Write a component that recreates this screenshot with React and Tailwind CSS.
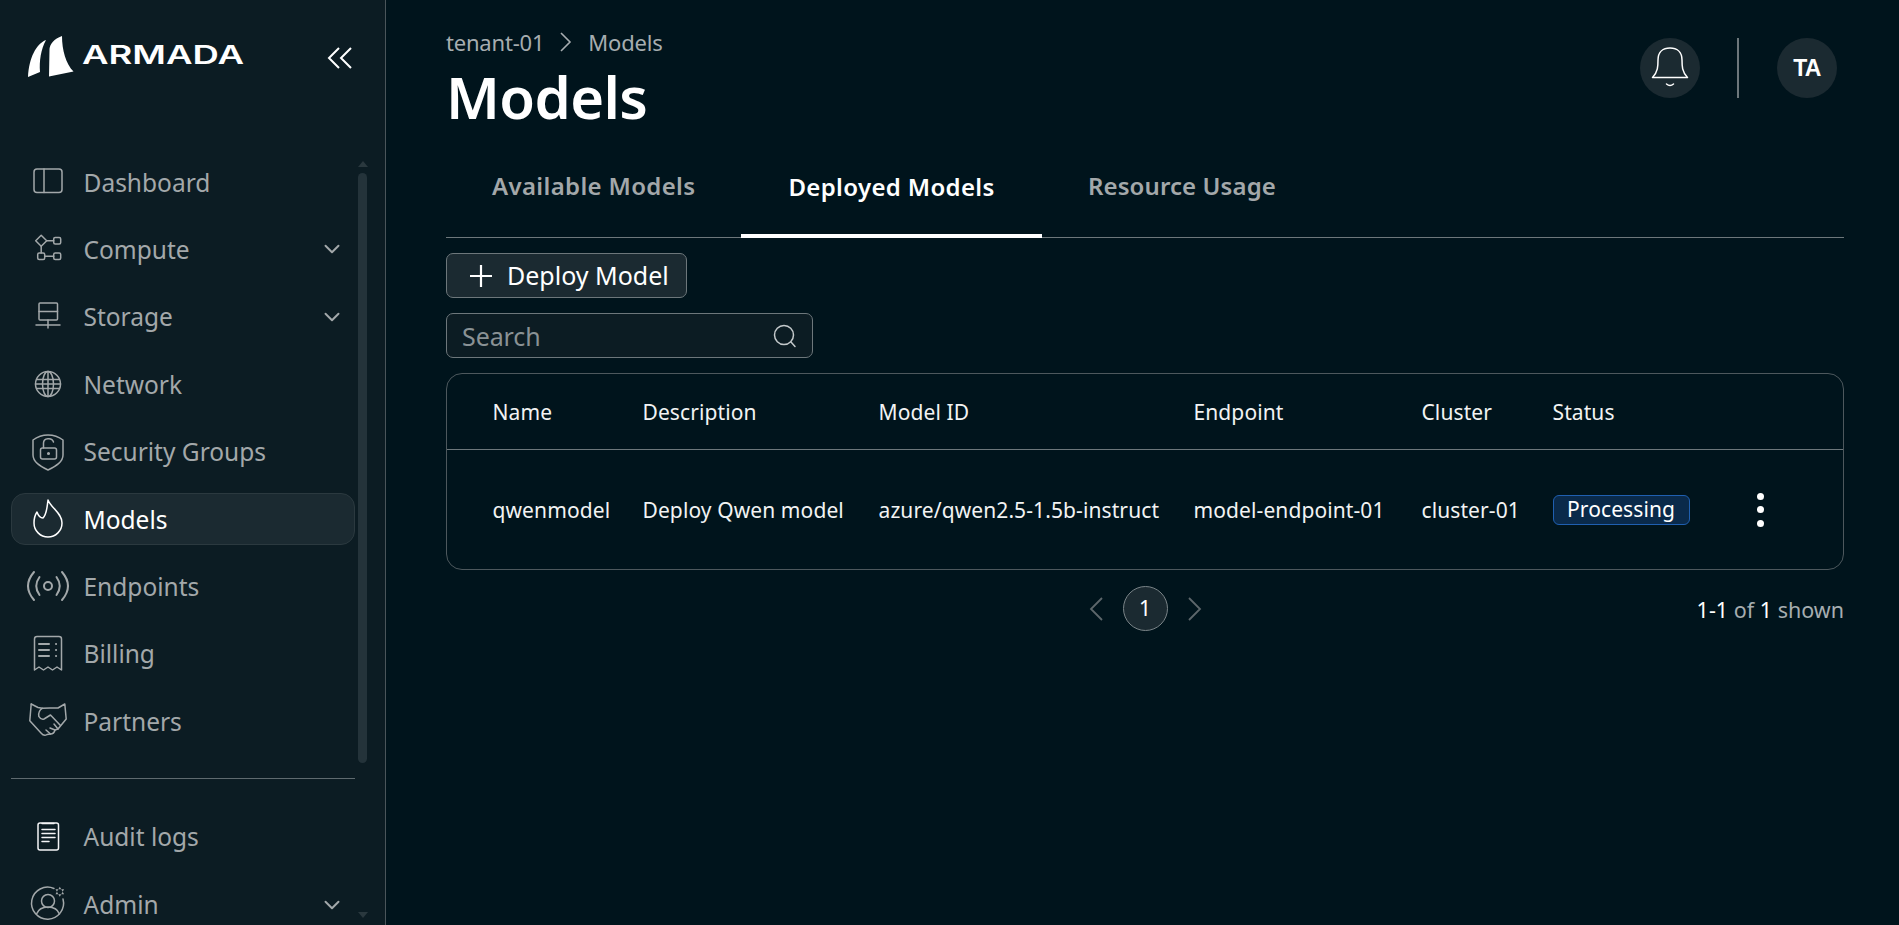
import { ChevronDown } from 'lucide-react'

const Svg = ({ children, className = '' }) => (
  <svg viewBox="0 0 40 40" fill="none" stroke="currentColor" strokeWidth="1.5" strokeLinecap="round" strokeLinejoin="round" className={`w-10 h-10 overflow-visible ${className}`}>
    {children}
  </svg>
)

const DashboardIcon = () => (
  <Svg>
    <rect x="6" y="7" width="28" height="23.5" rx="3" />
    <path d="M16 7v23.5" />
  </Svg>
)

const ComputeIcon = () => (
  <Svg>
    <path d="M13.2 6.2l5.5 5.5-5.5 5.5-5.5-5.5z" />
    <rect x="25.7" y="8.5" width="7" height="6.5" rx="1.5" />
    <rect x="9.7" y="24" width="7" height="6.5" rx="1.5" />
    <rect x="25.7" y="24" width="7" height="6.5" rx="1.5" />
    <path d="M18.7 11.7h7M13.2 17.2V24M16.7 27.3h9" />
  </Svg>
)

const StorageIcon = () => (
  <Svg>
    <rect x="11" y="6" width="18.5" height="17" rx="1" />
    <path d="M11 14.5h18.5M20 23v8M8 28h24" />
  </Svg>
)

const NetworkIcon = () => (
  <Svg>
    <circle cx="20" cy="20" r="12.5" />
    <ellipse cx="20" cy="20" rx="5.5" ry="12.5" />
    <path d="M20 7.5v25M9 15.5h22M9 24.5h22M7.5 20h25" />
  </Svg>
)

const SecurityIcon = () => (
  <Svg>
    <path d="M5 8c4-3 9-5 15-5s11 2 15 5v15c0 7-7 11-15 15-8-4-15-8-15-15z" />
    <rect x="12.5" y="16" width="16" height="11" rx="2" />
    <path d="M15.5 16v-5c0-5 8.500-6 10-1" />
    <circle cx="20.500" cy="21.500" r="0.8" fill="currentColor" />
  </Svg>
)

const FlameIcon = () => (
  <Svg>
    <path d="M20 1c3 8 14 13 14 23a14 14 0 0 1-28 0c0-4 1-8 3-11 1 3 3 6 6 6 4-4 4-11 5-18z" />
  </Svg>
)

const EndpointIcon = () => (
  <Svg>
    <circle cx="20" cy="20" r="4" strokeWidth="2" />
    <path strokeWidth="2" d="M6 6Q-6 20 6 34M34 6Q46 20 34 34M11.500 11Q5 20 11.500 29M28.500 11Q35 20 28.500 29" />
  </Svg>
)

const BillingIcon = () => (
  <Svg>
    <path d="M6.500 36V5a2.500 2.500 0 0 1 2.500-2.500h22A2.500 2.500 0 0 1 33.500 5v31l-4.500-3-4.500 3-4.500-3-4.500 3-4.500-3z" />
    <path d="M11 10h10M11 16h10M11 22h10M28 10h.1M28 16h.1M28 22h.1" strokeWidth="2" />
  </Svg>
)

const PartnersIcon = () => (
  <Svg>
    <path d="M3.200 3L1.800 19.700 13 32q3 3.500 6 1.500l3.500-.5q3.500 0 4.500-4l3-1 8.200-10L36.800 3 30 7h-8l-7.800.3Q10 10 10.800 15.300q2.200 3.700 5.200 2.700l6.500-4L32 24" />
    <path d="M3.200 3L10 6.500l4.200.8M22 27l5 2M18 29l4.500 4M26 23l4 5" />
  </Svg>
)

const AuditIcon = () => (
  <Svg className="text-gray-100">
    <rect x="10" y="7" width="20.500" height="27" rx="2" />
    <path d="M14 7.500h12M14 13.500h13M14 17.500h13M14 21.500h13M14 25.500h7" />
  </Svg>
)

const AdminIcon = () => (
  <Svg>
    <path d="M26 3.500A16 16 0 1 0 35 14" />
    <circle cx="20" cy="16" r="6.500" />
    <path d="M8.500 29c2-5 6.500-7 11.500-7s9.500 2 11.500 7" />
    <path d="M31.800 1.700l4.300 7.500h-8.600zM31.800 11.700l4.300-7.500h-8.600z" fill="currentColor" stroke="none" />
    <circle cx="31.800" cy="6.700" r="1.300" fill="#0c1c23" stroke="none" />
  </Svg>
)

const BellIcon = () => (
  <svg viewBox="0 0 60 60" fill="none" stroke="currentColor" strokeWidth="1.5" strokeLinejoin="round" strokeLinecap="round" className="w-[60px] h-[60px]">
    <path d="M12.500 39.500C18 34 18 28 18 22c0-8 5-12 12-12s12 4 12 12c0 6 0 12 5.500 17.500z" />
    <path d="M26.500 46q3.500 3 7 0" />
  </svg>
)

const LogoMark = () => (
  <svg viewBox="0 0 46 42" className="w-[46px] h-[42px] fill-white">
    <path d="M18 4C8 8 1 22 0 41L12 36C11 25 13 13 18 4z" />
    <path d="M34 0C26 3 22 8 21.500 13L21 40.500 45.500 35.500C38 28 34 14 34 0z" />
  </svg>
)

const navItems = [
  { label: 'Dashboard', icon: DashboardIcon },
  { label: 'Compute', icon: ComputeIcon, arrow: true },
  { label: 'Storage', icon: StorageIcon, arrow: true },
  { label: 'Network', icon: NetworkIcon },
  { label: 'Security Groups', icon: SecurityIcon },
  { label: 'Models', icon: FlameIcon, active: true },
  { label: 'Endpoints', icon: EndpointIcon },
  { label: 'Billing', icon: BillingIcon },
  { label: 'Partners', icon: PartnersIcon },
]

const bottomItems = [
  { label: 'Audit logs', icon: AuditIcon },
  { label: 'Admin', icon: AdminIcon, arrow: true },
]

const NavItem = ({ item }) => {
  const Icon = item.icon
  return (
    <div className={`h-[52px] shrink-0 flex items-center rounded-[14px] border ${item.active ? 'bg-[#1b2a31] border-[#2b393f] text-white' : 'border-transparent text-[#a3a8aa]'}`}>
      <div className="w-[71.5px] flex justify-center">
        <Icon />
      </div>
      <span className="pt-[2px] text-[24.5px]">{item.label}</span>
      {item.arrow && <ChevronDown className="ml-auto mr-[9px] w-[26px] h-[26px] text-[#a3a8aa]" strokeWidth={1.8} />}
    </div>
  )
}

const columns = ['Name', 'Description', 'Model ID', 'Endpoint', 'Cluster', 'Status']
const row = ['qwenmodel', 'Deploy Qwen model', 'azure/qwen2.5-1.5b-instruct', 'model-endpoint-01', 'cluster-01']
const gridCols = 'grid grid-cols-[150px_236px_315px_228px_131px_1fr]'

export default function App() {
  return (
    <div className="h-screen overflow-hidden flex bg-[#00141c] font-['Noto_Sans','Open_Sans',sans-serif]">
      {/* Sidebar */}
      <aside className="w-[386px] shrink-0 h-full flex flex-col bg-[#0c1c23] border-r border-[#4a555a]">
        <div className="h-[156px] shrink-0 flex items-start pt-[36px] pl-[28px]">
          <LogoMark />
          <span className="ml-[8px] mt-[4px] w-[162px] text-[25px] leading-[30px] font-semibold text-white font-['Inter',sans-serif] origin-left scale-x-[1.46]">ARMADA</span>
          <svg viewBox="0 0 26 22" fill="none" stroke="white" strokeWidth="2" className="ml-auto mr-[32px] mt-[11px] w-[26px] h-[22px]">
            <path d="M12 1L2 11l10 10M24 1L14 11l10 10" />
          </svg>
        </div>
        <div className="flex-1 min-h-0 flex">
          <div className="ml-[11px] w-[344px] flex flex-col">
            <nav className="flex flex-col gap-[15.4px]">
              {navItems.map((item) => <NavItem key={item.label} item={item} />)}
            </nav>
            <div className="mt-[31px] h-px bg-[#5f6a6f] shrink-0" />
            <div className="mt-[31px] flex flex-col gap-[16.5px]">
              {bottomItems.map((item) => <NavItem key={item.label} item={item} />)}
            </div>
          </div>
          {/* scrollbar */}
          <div className="ml-[3px] w-[9px] flex flex-col items-center pt-[5px] pb-[7px]">
            <div className="w-0 h-0 border-x-[5px] border-x-transparent border-b-[6px] border-b-[#2a383e]" />
            <div className="mt-[6px] w-[9px] h-[590px] rounded-full bg-[#24333a]" />
            <div className="mt-auto w-0 h-0 border-x-[5px] border-x-transparent border-t-[6px] border-t-[#2a383e]" />
          </div>
        </div>
      </aside>

      {/* Main */}
      <main className="flex-1 min-w-0 pl-[60px] pr-[55px]">
        <header className="h-[135px] flex justify-between">
          <div>
            <div className="mt-[27px] h-[30px] flex items-center text-[22px] tracking-[-0.2px] text-[#a6adb0]">
              <span>tenant-01</span>
              <svg viewBox="0 0 12 20" fill="none" stroke="currentColor" strokeWidth="1.6" className="mx-[16px] w-[12px] h-[20px]">
                <path d="M1 1l9 9-9 9" />
              </svg>
              <span>Models</span>
            </div>
            <h1 className="mt-[5px] h-[70px] text-[58px] leading-[70px] font-semibold tracking-[-0.6px] text-white">Models</h1>
          </div>
          <div className="mt-[38px] mr-[7px] flex items-start">
            <div className="w-[60px] h-[60px] rounded-full bg-[#1b2a31] text-white">
              <BellIcon />
            </div>
            <div className="ml-[37px] mr-[38px] w-[2px] h-[60px] bg-[#6d777b]" />
            <div className="w-[60px] h-[60px] rounded-full bg-[#1b2a31] flex items-center justify-center text-white text-[23px] font-bold tracking-[-0.8px] font-['Liberation_Sans',sans-serif]">TA</div>
          </div>
        </header>

        {/* Tabs */}
        <div className="h-[103px] flex border-b border-[#6d777b] text-[24px] font-semibold tracking-[0.35px]">
          <div className="w-[295px] pl-[46px] flex items-center text-[#a3a8aa]">Available Models</div>
          <div className="w-[301px] -mb-px pt-[4px] flex items-center justify-center text-white border-b-[4px] border-white">Deployed Models</div>
          <div className="pl-[46px] flex items-center tracking-[0.1px] text-[#a3a8aa]">Resource Usage</div>
        </div>

        <button className="mt-[15px] w-[241px] h-[45px] flex items-center rounded-[7px] border border-[#6d777b] bg-[#1b2a31] text-white text-[25px]">
          <svg viewBox="0 0 22 22" fill="none" stroke="currentColor" strokeWidth="2.2" className="ml-[23px] mr-[15px] w-[22px] h-[22px]">
            <path d="M11 0v22M0 11h22" />
          </svg>
          Deploy Model
        </button>

        <div className="mt-[15px] w-[367px] h-[45px] flex items-center justify-between rounded-[7px] border border-[#6d777b] bg-[#0c1c23] pl-[15px] pr-[15px]">
          <span className="pt-[3px] text-[25px] tracking-[-0.1px] text-[#8a9295]">Search</span>
          <svg viewBox="0 0 24 24" fill="none" stroke="#c4c9cb" strokeWidth="1.5" strokeLinecap="round" className="w-[24px] h-[24px]">
            <circle cx="11" cy="11" r="9.500" />
            <path d="M18 18l4 4.500" />
          </svg>
        </div>

        {/* Table */}
        <div className="mt-[15px] h-[197px] rounded-[16px] border border-[#4d585d] text-[21px] tracking-[0.1px] text-[#f2f3f3]">
          <div className={`${gridCols} h-[76px] items-center pl-[45.5px] pt-[3px] border-b border-[#6d777b]`}>
            {columns.map((col) => <div key={col}>{col}</div>)}
          </div>
          <div className={`${gridCols} h-[119px] items-center pl-[45.5px] pt-[2px]`}>
            {row.map((cell) => <div key={cell} className="whitespace-nowrap">{cell}</div>)}
            <div className="flex items-center">
              <span className="w-[137px] h-[30px] -mt-[2px] flex items-center justify-center rounded-[6px] border border-[#1f5fb0] bg-[#0a2a4a] text-white">Processing</span>
              <div className="ml-[67px] -mt-[2px] flex flex-col gap-[6.500px]">
                <span className="w-[7px] h-[7px] rounded-full bg-white" />
                <span className="w-[7px] h-[7px] rounded-full bg-white" />
                <span className="w-[7px] h-[7px] rounded-full bg-white" />
              </div>
            </div>
          </div>
        </div>

        {/* Pagination */}
        <div className="mt-[16px] h-[45px] grid grid-cols-[1fr_auto_1fr] items-center">
          <div />
          <div className="flex items-center gap-[20px] text-[#5d676b]">
            <svg viewBox="0 0 14 24" fill="none" stroke="currentColor" strokeWidth="1.8" className="w-[14px] h-[24px]">
              <path d="M13 1L2 12l11 11" />
            </svg>
            <div className="w-[45px] h-[45px] rounded-full border border-[#7a8488] bg-[#1b2a31] flex items-center justify-center text-white text-[21px]">1</div>
            <svg viewBox="0 0 14 24" fill="none" stroke="currentColor" strokeWidth="1.8" className="w-[14px] h-[24px]">
              <path d="M1 1l11 11L1 23" />
            </svg>
          </div>
          <div className="pt-[3px] text-right text-[21.5px] text-[#a6adb0]">
            <span className="text-white">1-1</span> of <span className="text-white">1</span> shown
          </div>
        </div>
      </main>
    </div>
  )
}
